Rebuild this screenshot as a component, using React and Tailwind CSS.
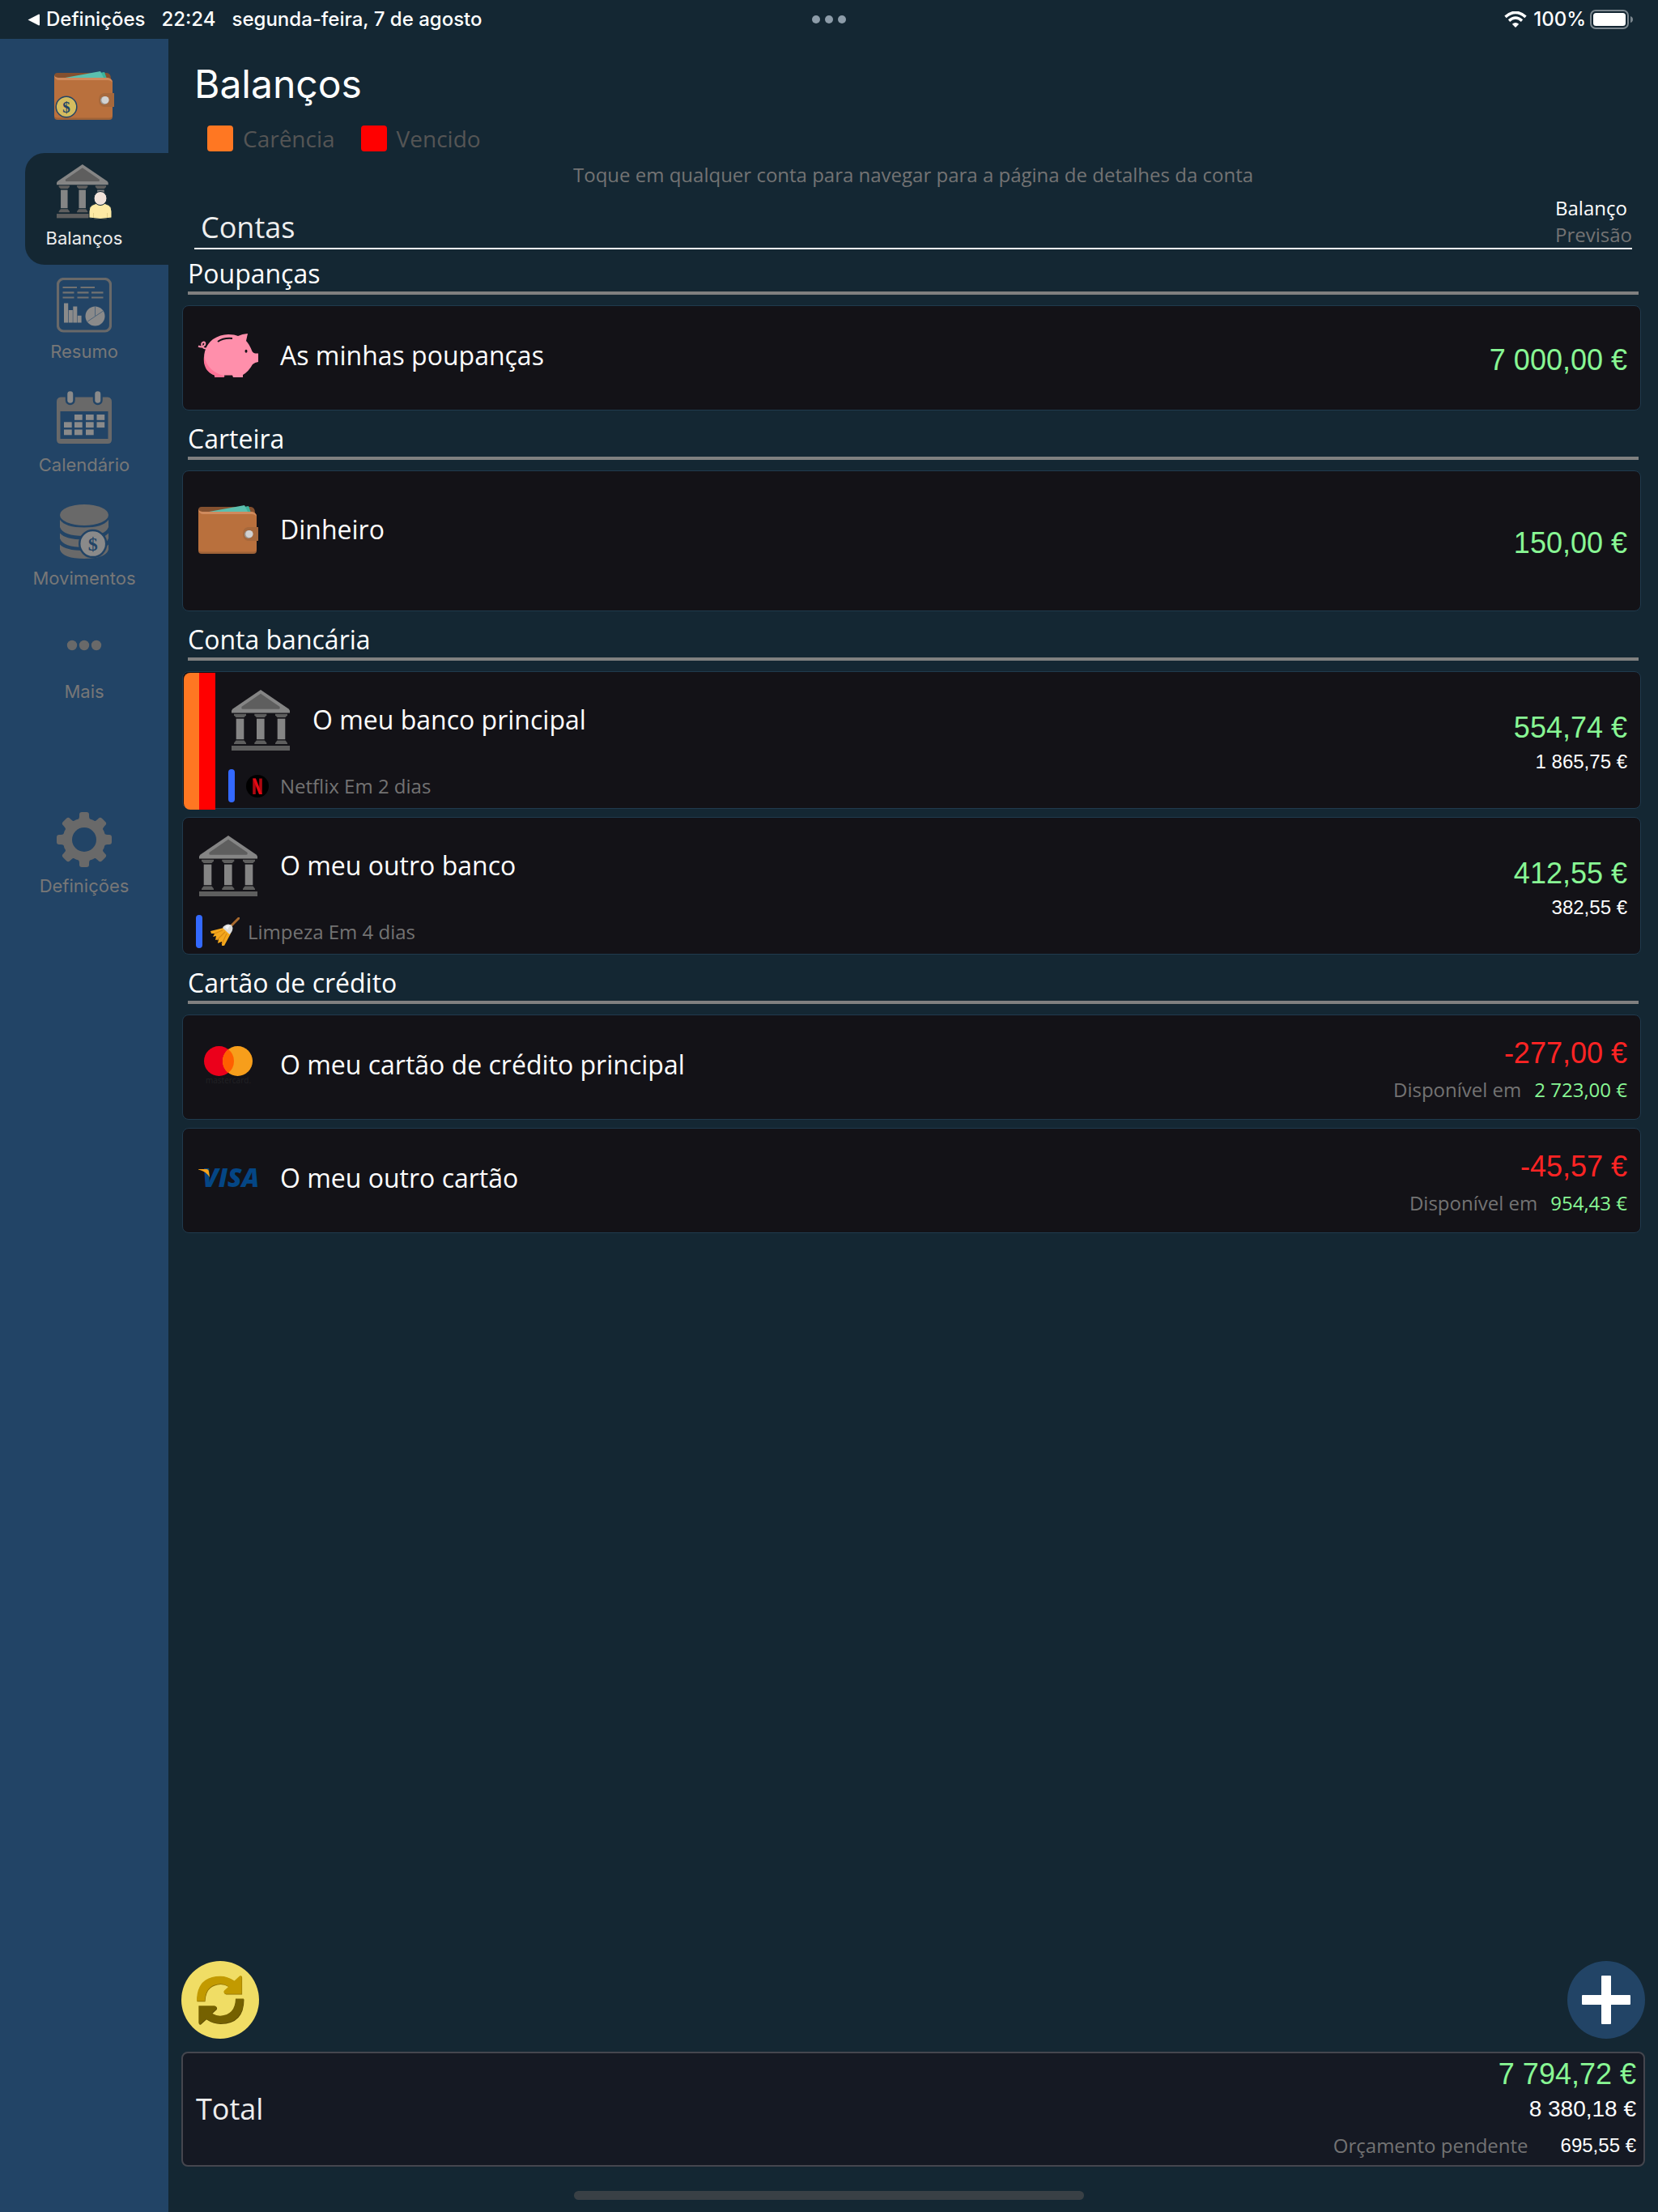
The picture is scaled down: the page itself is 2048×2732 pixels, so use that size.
import React from "react";

const SANS = "font-['Open_Sans','Noto_Sans',sans-serif]";
const AMOUNT = "font-['Liberation_Sans',Arial,sans-serif]";

/* ---------- icons ---------- */

function Wallet({ coin }) {
  return (
    <svg width="74" height="60" viewBox="0 0 74 60" aria-hidden="true">
      <path d="M0 6Q0 2 4 2H65Q70 3 70 9V14H0Z" fill="#84502f" />
      <path d="M56 2L62 1L66 12H54Z" fill="#3cb39b" />
      <path d="M8 9L57 0L62 10H8Z" fill="#5bbfae" />
      <path d="M0 5Q1 8 5 8H66Q72 9 72 14V56Q72 60 68 60H4Q0 60 0 56Z" fill="#9e6238" />
      <path d="M0 5Q1 8 5 8H66Q72 9 72 14V54Q72 57.500 68 57.500H4Q0 57.500 0 54Z" fill="#b9703d" />
      <path d="M0 5Q1 8 5 8H66Q71 9 72 14Q70 11 66 11H6Q1 11 0 5Z" fill="#cf8a5d" />
      <path d="M74 27H61Q55 28 55 35.500Q55 43 61 44H74Z" fill="#a6683c" />
      <circle cx="62" cy="36" r="5" fill="#9b9b9b" />
      <circle cx="63" cy="35.500" r="4.600" fill="#d2d2d2" />
      {coin && (
        <g>
          <circle cx="15" cy="44" r="12.800" fill="#d4bc5f" stroke="#224466" strokeWidth="1.500" />
          <text x="15" y="51" textAnchor="middle" fontSize="19" fontWeight="700" fill="#224466" className="font-['Liberation_Serif',serif]">$</text>
        </g>
      )}
    </svg>
  );
}

function BankShape() {
  return (
    <g>
      <path d="M36 0L70.500 23.500Q72 25 72 26V28.500H0V26Q0 25 1.500 23.500Z" fill="#858585" />
      <path d="M36 4.800L59 20.500Q61 23.600 58 23.800H14Q11 23.600 13 20.500Z" fill="#5e5e5e" />
      {[0, 25.300, 51].map((x) => (
        <g key={x} transform={`translate(${x} 0)`}>
          <path d="M3 29.800H18V31.500L15.500 34H5.500L3 31.500Z" fill="#5e5e5e" />
          <rect x="5.700" y="35.600" width="9.600" height="25.600" fill="#858585" />
          <path d="M5.500 62.500H15.500L18 65.500V67H3V65.500Z" fill="#5e5e5e" />
        </g>
      ))}
      <rect x="0" y="69" width="72" height="6" fill="#5e5e5e" />
    </g>
  );
}

function Bank() {
  return (
    <svg width="72" height="75" viewBox="0 0 72 75" aria-hidden="true">
      <BankShape />
    </svg>
  );
}

function BankUser() {
  return (
    <svg width="68" height="68" viewBox="0 0 68 68" aria-hidden="true">
      <g transform="scale(0.885)"><BankShape /></g>
      <path d="M40 67V58Q40 48 54 48Q68 48 68 58V66Q54 69 40 66Z" fill="#feeaa4" stroke="#142733" strokeWidth="1" />
      <ellipse cx="54" cy="42" rx="8" ry="8.500" fill="#f1e2d9" stroke="#142733" strokeWidth="1" />
      <path d="M45.500 60V66M62.500 60V66" stroke="#e3cf88" strokeWidth="1" />
    </svg>
  );
}

function Report() {
  return (
    <svg width="68" height="68" viewBox="0 0 68 68" aria-hidden="true">
      <rect x="1.500" y="1.500" width="65" height="64.500" rx="7" fill="none" stroke="#696969" strokeWidth="3.200" />
      <path d="M7.500 12H25M29.500 12H47M7.500 18.300H21.500M25.500 18.300H39.500M43 18.300H57.500M7.500 24.500H21.500M25.500 24.500H39.500M43 24.500H57.500" stroke="#717171" strokeWidth="2.200" />
      <g fill="#8a8a8a">
        <rect x="9" y="31.500" width="5.200" height="24" />
        <rect x="14.800" y="40" width="5" height="15.500" />
        <rect x="20.300" y="35.500" width="5" height="20" />
        <rect x="25.800" y="46.800" width="4.800" height="8.700" />
      </g>
      <circle cx="47.500" cy="47.500" r="12" fill="#8a8a8a" />
      <path d="M47.500 47.500V35.500M37.500 54.500L57.500 41" stroke="#4d6379" strokeWidth="1" />
    </svg>
  );
}

function Calendar() {
  const cells = [[22, 29], [36, 29], [49.500, 29], [9, 38.300], [22, 38.300], [36, 38.300], [49.500, 38.300], [9, 47.500], [22, 47.500], [36, 47.500]];
  return (
    <svg width="68" height="68" viewBox="0 0 68 68" aria-hidden="true">
      <path fillRule="evenodd" d="M5 7.500H63Q68 8 68 13V60Q68 65 63 65H5Q0 65 0 60V13Q0 8 5 7.500ZM4.500 25V59H63.500V25Z" fill="#696969" />
      {[13.500, 47.500].map((x) => (
        <rect key={x} x={x - 1.500} y="-1" width="9.500" height="17" rx="4.700" fill="#8a8a8a" stroke="#224466" strokeWidth="2.500" />
      ))}
      {cells.map(([x, y]) => (
        <rect key={`${x}-${y}`} x={x} y={y} width="9.700" height="6.800" fill="#8a8a8a" />
      ))}
    </svg>
  );
}

function Coins() {
  return (
    <svg width="60" height="68" viewBox="0 0 60 68" aria-hidden="true">
      <ellipse cx="30" cy="13" rx="30" ry="13" fill="#696969" />
      {[0, 14, 28].map((y) => (
        <path key={y} transform={`translate(0 ${y})`} d="M0 19Q7 28.500 30 28.500Q53 28.500 60 19V28Q56 39 30 39Q4 39 0 28Z" fill="#696969" />
      ))}
      <path d="M0 33Q5 42 30 42Q55 42 60 33M0 47Q5 55.500 30 55.500Q55 55.500 60 47" fill="none" stroke="#224466" strokeWidth="3" />
      <circle cx="40.700" cy="48.600" r="16.500" fill="#8a8a8a" stroke="#224466" strokeWidth="2.500" />
      <text x="40.700" y="57" textAnchor="middle" fontSize="24" fontWeight="700" fill="#224466" className="font-['Liberation_Serif',serif]">$</text>
    </svg>
  );
}

function Dots() {
  return (
    <svg width="44" height="68" viewBox="0 0 44 68" aria-hidden="true">
      {[7, 22, 37].map((x) => <circle key={x} cx={x} cy="34" r="6.200" fill="#696969" />)}
    </svg>
  );
}

function Gear() {
  return (
    <svg width="68" height="68" viewBox="0 0 68 68" aria-hidden="true">
      <defs>
        <mask id="gear-hole">
          <rect width="68" height="68" fill="#fff" />
          <circle cx="34" cy="34" r="15" fill="#000" />
        </mask>
      </defs>
      <g mask="url(#gear-hole)" fill="#696969">
        <circle cx="34" cy="34" r="26.500" />
        {[0, 45, 90, 135].map((a) => (
          <g key={a} transform={`rotate(${a} 34 34)`}>
            <rect x="28" y="0" width="12" height="68" rx="3" />
            <path d="M25 10Q28 9 28 5H40Q40 9 43 10V58Q40 59 40 63H28Q28 59 25 58Z" />
          </g>
        ))}
      </g>
    </svg>
  );
}

function Piggy() {
  return (
    <svg width="74" height="54" viewBox="0 0 74 54" className="overflow-visible" aria-hidden="true">
      <path d="M0 15.500Q5 18 8 14Q9 10.500 6.500 10.500Q3.500 11 4.500 15Q6 19 11 18.500" fill="none" stroke="#ff8fab" strokeWidth="2" />
      <path d="M7 30Q7 16 18 7Q27 1 37 1Q45 1 49 3Q54 0.500 61 0L59 9Q63 13 66.500 22Q68 25 74 24.500V35Q70 35.500 67 38Q62 47 55 51V54H43L42 51.500H32V54H20V51.500Q7 46 7 30Z" fill="#ff8fab" />
      <path d="M7 28Q12 48 34 52.500H32V54H20V51.500Q5 46 7 28Z" fill="#ff7397" />
      <path d="M24 10Q31 5 42 6" fill="none" stroke="#131217" strokeWidth="2" />
      <ellipse cx="59" cy="21.800" rx="1.500" ry="2" fill="#131217" />
    </svg>
  );
}

function Mastercard() {
  return (
    <svg width="60" height="46" viewBox="0 0 60 46" className="overflow-visible" aria-label="mastercard">
      <circle cx="18.500" cy="18.500" r="18.500" fill="#eb001b" />
      <circle cx="41.500" cy="18.500" r="18.500" fill="#f79e1b" />
      <path d="M30 4Q37 9.500 37 18.500Q37 27.500 30 33Q23 27.500 23 18.500Q23 9.500 30 4Z" fill="#ff5f00" />
      <text x="30" y="46" textAnchor="middle" fontSize="10" fill="#222226" className="font-['Open_Sans',sans-serif]">mastercard.</text>
    </svg>
  );
}

function Visa() {
  return (
    <svg width="74" height="24" viewBox="0 0 74 24" className="overflow-visible" aria-label="VISA">
      <text x="5" y="23" fontSize="32" fontWeight="800" fontStyle="italic" fill="#044685" className="font-['Open_Sans',sans-serif]">VISA</text>
      <path d="M0 1H10Q12.500 1 13 4L14 11Q10 4 0 1.500Z" fill="#f6a21b" />
    </svg>
  );
}

function Netflix() {
  return (
    <svg width="28" height="28" viewBox="0 0 28 28" aria-hidden="true">
      <circle cx="14" cy="14" r="14" fill="#000" />
      <path d="M10 4.500V24M18 4.500V24" stroke="#b0070f" strokeWidth="3.600" />
      <path d="M8.300 4.500H12L19.700 24H16Z" fill="#e50914" />
    </svg>
  );
}

function Broom() {
  return (
    <svg width="36" height="36" viewBox="0 0 36 36" aria-hidden="true">
      <path d="M24 12L35 1" stroke="#a96a2e" strokeWidth="3" strokeLinecap="round" />
      <path d="M16 13L0 17L1 20L5 20L3 24L7 23L6 28L10 27L9 32L14 30L14 35L17 35L25 20Z" fill="#f4a81d" />
      <path d="M15 16L5 20M18 18L8 28M20 20L14 33" stroke="#d98a12" strokeWidth="1.200" />
      <path d="M15 13Q17 9 22 8.500L26 9.500L27.500 13Q27 18.500 23.500 21Z" fill="#dcdcdc" />
      <path d="M18 12Q20 9.500 24 10L21 15Z" fill="#f6f6f6" />
    </svg>
  );
}

function Refresh() {
  const arrow = "M19 49.500Q19 19 48 18.800Q57 18.800 65.500 24.500L72 18.500Q74.600 17 74.600 20V40.700H55Q51 39.500 53 36.500L58.500 31.500Q53 28.300 48 28.300Q29.500 29.500 29 49.500Z";
  return (
    <svg width="96" height="96" viewBox="0 0 96 96" aria-hidden="true">
      <path d={arrow} fill="#8a6d00" transform="translate(0.500 0.800)" />
      <path d={arrow} fill="#c29a00" />
      <path d={arrow} fill="#5c4b00" transform="translate(0.500 0.800) rotate(180 48 48)" />
      <path d={arrow} fill="#756100" transform="rotate(180 48 48)" />
    </svg>
  );
}

function Plus() {
  return (
    <svg width="60" height="60" viewBox="0 0 60 60" aria-hidden="true">
      <rect x="24" y="0" width="12" height="60" rx="1" fill="#fff" />
      <rect x="0" y="24" width="60" height="12" rx="1" fill="#fff" />
    </svg>
  );
}

function Wifi() {
  return (
    <svg width="28" height="20" viewBox="0 0 28 20" aria-hidden="true">
      <path d="M1.500 6.800Q14 -4 26.500 6.800" fill="none" stroke="#fff" strokeWidth="3.600" />
      <path d="M6 11.600Q14 4.600 22 11.600" fill="none" stroke="#fff" strokeWidth="3.400" />
      <path d="M14 20L9.800 15.700Q14 12.200 18.200 15.700Z" fill="#fff" />
    </svg>
  );
}

function Battery() {
  return (
    <svg width="54" height="24" viewBox="0 0 54 24" aria-hidden="true">
      <rect x="1" y="1" width="46" height="22" rx="6" fill="none" stroke="#7b868e" strokeWidth="2" />
      <rect x="4" y="4" width="40" height="16" rx="3.500" fill="#fff" />
      <path d="M50 8Q53 9 53 12Q53 15 50 16Z" fill="#7b868e" />
    </svg>
  );
}

/* ---------- pieces ---------- */

function StatusBar() {
  return (
    <header className="grid h-12 grid-cols-[1fr_auto_1fr] items-center px-[30px] text-[24px] font-medium">
      <div className="flex items-center pl-1">
        <button type="button" className="flex items-center gap-2">
          <svg width="15" height="15" viewBox="0 0 15 15" aria-hidden="true"><path d="M0.500 7.500L14 0.500Q15 0.500 15 1.500V13.500Q15 14.500 14 14.500Z" fill="#fff" /></svg>
          Definições
        </button>
        <time className="ml-5">22:24</time>
        <span className="ml-5">segunda-feira, 7 de agosto</span>
      </div>
      <button type="button" aria-label="Multitarefa" className="flex gap-[6px]">
        <i className="size-[10px] rounded-full bg-[#8d9ca9]" />
        <i className="size-[10px] rounded-full bg-[#8d9ca9]" />
        <i className="size-[10px] rounded-full bg-[#8d9ca9]" />
      </button>
      <div className="flex items-center justify-end">
        <Wifi />
        <span className="ml-2 mr-[5px]">100%</span>
        <Battery />
      </div>
    </header>
  );
}

function NavItem({ icon, label, active, last }) {
  return (
    <button
      type="button"
      aria-current={active ? "page" : undefined}
      className={`flex h-[138px] flex-col items-center gap-[9px] rounded-l-[24px] pt-[14px] pr-[31px] text-[22px] leading-7 ${active ? "bg-[#142733] text-[#ececec]" : "text-[#777777]"} ${last ? "mt-[100px]" : ""}`}
    >
      <span className="flex h-[68px] items-center justify-center">{icon}</span>
      {label}
    </button>
  );
}

function Section({ title, first, children }) {
  return (
    <section className={first ? "mt-2" : "mt-[13px]"}>
      <h2 className="mx-2 mb-[13px] border-b-4 border-[#808080] text-[32px] leading-[44px]">{title}</h2>
      <div className="mr-[5px] ml-px flex flex-col gap-[10px]">{children}</div>
    </section>
  );
}

function Account({ icon, name, size = "pt-6 pb-[30px]", alert, note, amount, negative, forecast, available }) {
  return (
    <button type="button" className="flex w-full items-stretch rounded-lg border border-[#203a4d] bg-[#131217] text-left">
      {alert && (
        <span className="mt-px -mb-[2px] ml-px flex w-[39px] overflow-hidden rounded-l-lg">
          <i className="flex-1 bg-[#ff7722]" />
          <i className="w-5 bg-[#ff0000]" />
        </span>
      )}
      <span className="flex flex-1 flex-col pl-4">
        <span className={`flex items-center gap-[27px] pl-[3px] ${size}`}>
          <span className="flex size-[74px] items-center justify-center">{icon}</span>
          <span className="text-[32px] leading-[44px]">{name}</span>
        </span>
        {note && (
          <span className="mb-[7px] flex items-center">
            <i className="h-[41px] w-2 rounded-full bg-[#3369ff]" />
            <span className="flex w-14 justify-center">{note.icon}</span>
            <span className="text-[24px] leading-[33px] text-[#737373]">{note.text}</span>
          </span>
        )}
      </span>
      <span className="flex flex-col items-end justify-center gap-[7px] pt-[5px] pr-4">
        <span className={`${AMOUNT} text-[36px] leading-[42px] ${negative ? "text-[#ff2424]" : "text-[#88f794]"}`}>{amount}</span>
        {forecast && <span className={`${AMOUNT} text-[24px] leading-7`}>{forecast}</span>}
        {available && (
          <span className="flex gap-4 text-[24px] leading-[33px]">
            <span className="text-[#737373]">Disponível em</span>
            <span className="text-[#88f794]">{available}</span>
          </span>
        )}
      </span>
    </button>
  );
}

export default function App() {
  return (
    <div className="flex min-h-screen flex-col bg-[#142733] font-['Inter',sans-serif] text-white">
      <StatusBar />
      <div className="flex flex-1">
        <aside className="w-[208px] shrink-0 bg-[#224466]">
          <div className="flex h-[141px] justify-center pt-10">
            <Wallet coin />
          </div>
          <nav className="flex flex-col gap-[2px] pl-[31px]">
            <NavItem active icon={<BankUser />} label="Balanços" />
            <NavItem icon={<Report />} label="Resumo" />
            <NavItem icon={<Calendar />} label="Calendário" />
            <NavItem icon={<Coins />} label="Movimentos" />
            <NavItem icon={<Dots />} label="Mais" />
            <NavItem last icon={<Gear />} label="Definições" />
          </nav>
        </aside>

        <main className={`flex flex-1 flex-col px-4 pb-[15px] ${SANS}`}>
          <div className="mx-4 pt-[27px]">
            <h1 className="font-['Inter',sans-serif] text-[48px] leading-[58px]">Balanços</h1>
            <div className="mt-[19px] ml-4 flex items-center text-[28px] leading-[38px] text-[#555555]">
              <i className="mr-3 size-8 rounded bg-[#ff7722]" />
              Carência
              <i className="mr-3 ml-8 size-8 rounded bg-[#ff0000]" />
              Vencido
            </div>
            <p className="mt-[9px] text-center text-[24px] leading-[34px] text-[#737373]">
              Toque em qualquer conta para navegar para a página de detalhes da conta
            </p>
            <div className="mt-[7px] flex items-end justify-between border-b-2 border-white pl-2">
              <span className="text-[36px] leading-[50px] text-[#eeeeee]">Contas</span>
              <div className="text-[24px] leading-[33px]">
                <div>Balanço</div>
                <div className="text-[#737373]">Previsão</div>
              </div>
            </div>
          </div>

          <Section title="Poupanças" first>
            <Account icon={<Piggy />} name="As minhas poupanças" amount="7 000,00 €" />
          </Section>
          <Section title="Carteira">
            <Account icon={<Wallet />} name="Dinheiro" size="pt-[35px] pb-[63px]" amount="150,00 €" />
          </Section>
          <Section title="Conta bancária">
            <Account alert icon={<Bank />} name="O meu banco principal" size="pt-[22px] pb-6" amount="554,74 €" forecast="1 865,75 €" note={{ icon: <Netflix />, text: "Netflix Em 2 dias" }} />
            <Account icon={<Bank />} name="O meu outro banco" size="pt-[22px] pb-6" amount="412,55 €" forecast="382,55 €" note={{ icon: <Broom />, text: "Limpeza Em 4 dias" }} />
          </Section>
          <Section title="Cartão de crédito">
            <Account icon={<Mastercard />} name="O meu cartão de crédito principal" negative amount="-277,00 €" available="2 723,00 €" />
            <Account icon={<Visa />} name="O meu outro cartão" negative amount="-45,57 €" available="954,43 €" />
          </Section>

          <div className="mt-auto mb-4 flex justify-between">
            <button type="button" aria-label="Atualizar" className="size-24 rounded-full bg-[#f0dd65]"><Refresh /></button>
            <button type="button" aria-label="Adicionar" className="flex size-24 items-center justify-center rounded-full bg-[#224466]"><Plus /></button>
          </div>
          <div className="flex items-center justify-between rounded-lg border-2 border-[#45464e] bg-[#151923] pr-[9px] pl-4">
            <span className="text-[36px] leading-[52px] text-[#eeeeee]">Total</span>
            <div className={`flex flex-col items-end pt-[5px] pb-[5px] ${AMOUNT}`}>
              <span className="text-[36px] leading-[42px] text-[#88f794]">7 794,72 €</span>
              <span className="my-[3px] text-[28px] leading-[38px]">8 380,18 €</span>
              <span className="flex items-center gap-10 pt-[3px] text-[24px] leading-[39px]">
                <span className={`text-[#737373] ${SANS}`}>Orçamento pendente</span>
                695,55 €
              </span>
            </div>
          </div>
        </main>
      </div>
      <Footer />
    </div>
  );
}

/* The sidebar colour continues behind the home indicator. */
function Footer() {
  return (
    <footer className="flex h-[41px] justify-center bg-[linear-gradient(to_right,#224466_208px,#142733_208px)] pt-[15px]">
      <div className="h-[11px] w-[630px] rounded-full bg-[#394045]" />
    </footer>
  );
}
